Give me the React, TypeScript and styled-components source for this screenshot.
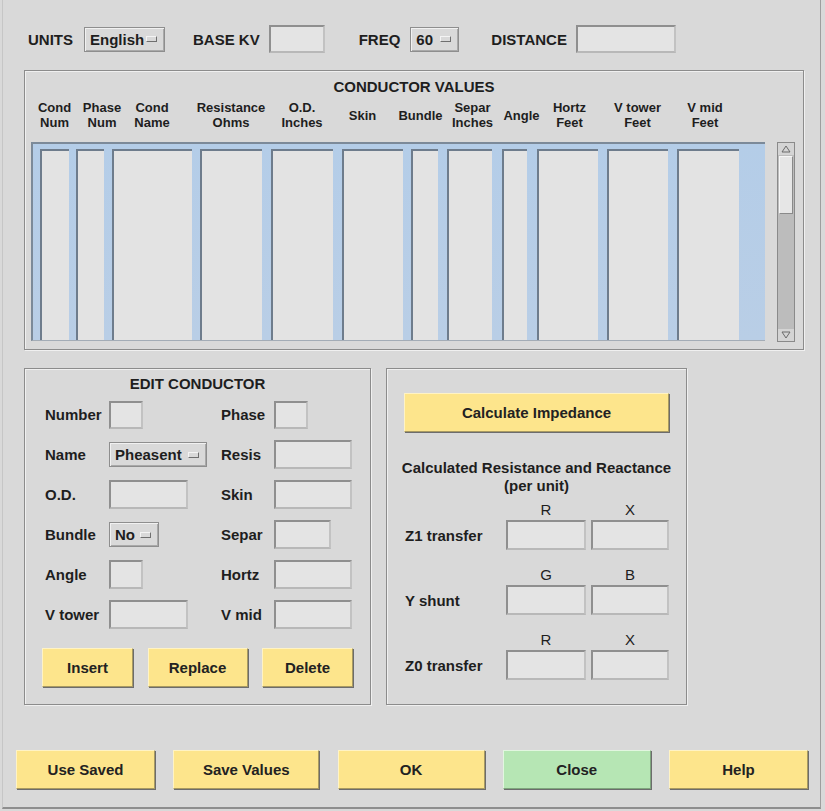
import React from 'react'
import styled, { createGlobalStyle, css } from 'styled-components'

type TColumn = {
  w: number
  track: number
  head: string[]
  dx?: number
}

const columns: TColumn[] = [
  { w: 29, track: 36, head: ['Cond', 'Num'] },
  { w: 28, track: 36, head: ['Phase', 'Num'], dx: 12 },
  { w: 80, track: 88, head: ['Cond', 'Name'] },
  { w: 62, track: 71, head: ['Resistance', 'Ohms'] },
  { w: 62, track: 71, head: ['O.D.', 'Inches'] },
  { w: 61, track: 69, head: ['Skin'], dx: -10 },
  { w: 27, track: 36, head: ['Bundle'], dx: -4 },
  { w: 45, track: 55, head: ['Separ', 'Inches'], dx: 3 },
  { w: 25, track: 35, head: ['Angle'], dx: 7 },
  { w: 61, track: 70, head: ['Hortz', 'Feet'], dx: 2 },
  { w: 61, track: 70, head: ['V tower', 'Feet'] },
  { w: 62, track: 62, head: ['V mid', 'Feet'], dx: -3 },
]

const tracks = columns.map(c => `${c.track}px`).join(' ')

const GlobalStyle = createGlobalStyle`
  html, body {
    margin: 0;
    padding: 0;
    background: #d9d9d9;
  }
  body {
    font-family: 'Liberation Sans', Arial, sans-serif;
    color: #1e1e1e;
  }
`

const Window = styled.div`
  box-sizing: border-box;
  margin-left: 2px;
  width: 819px;
  height: 809px;
  background: #d9d9d9;
  border-left: 1px solid #c6c6c6;
  border-right: 1px solid #9e9e9e;
  border-bottom: 2px solid #8e8e8e;
  display: flex;
  flex-direction: column;
`

const Content = styled.div`
  padding: 25px 0 0 21px;
`

const TopBar = styled.div`
  display: flex;
  align-items: center;
  height: 28px;
  padding-left: 4px;
`

// $lead = space before the group, $gap = label to control
const Group = styled.div<{ $lead?: number; $gap?: number }>`
  display: flex;
  align-items: center;
  gap: ${p => p.$gap ?? 9}px;
  margin-left: ${p => p.$lead ?? 0}px;
`

const Label = styled.span`
  font-size: 15px;
  font-weight: bold;
  white-space: nowrap;
`

const Field = styled.div<{ $w: number; $h?: number }>`
  box-sizing: border-box;
  width: ${p => p.$w}px;
  height: ${p => p.$h ?? 29}px;
  background: #e4e4e4;
  border: 2px solid;
  border-color: #8f8f8f #c2c2c2 #b8b8b8 #8f8f8f;
`

const Dropdown = styled.div<{ $w: number }>`
  box-sizing: border-box;
  width: ${p => p.$w}px;
  height: 25px;
  display: flex;
  align-items: center;
  justify-content: space-between;
  padding: 0 7px 0 5px;
  border: 1px solid #8e8e8e;
  box-shadow: inset 1px 1px 0 #f1f1f1, inset -1px -1px 0 #a9a9a9;
  font-size: 15px;
  font-weight: bold;
`

const Indicator = styled.span`
  box-sizing: border-box;
  width: 11px;
  height: 6px;
  border: 1px solid;
  border-color: #f4f4f4 #6f6f6f #6f6f6f #f4f4f4;
`

const Panel = styled.div<{ $w: number; $h: number }>`
  box-sizing: border-box;
  width: ${p => p.$w}px;
  height: ${p => p.$h}px;
  border: 1px solid #8c8c8c;
  box-shadow: inset 1px 1px 0 #f0f0f0, 1px 1px 0 #f0f0f0;
`

const ValuesPanel = styled(Panel)`
  margin-top: 17px;
`

const PanelTitle = styled.div`
  padding-top: 7px;
  font-size: 15px;
  font-weight: bold;
  line-height: 18px;
  text-align: center;
`

const HeaderRow = styled.div`
  display: grid;
  grid-template-columns: ${tracks};
  align-items: center;
  height: 30px;
  margin-top: 4px;
  padding-left: 15px;
`

const HeaderCell = styled.div<{ $w: number; $dx: number }>`
  width: ${p => p.$w}px;
  display: flex;
  justify-content: center;
  transform: translateX(${p => p.$dx}px);
  font-size: 13px;
  font-weight: bold;
  line-height: 15px;
  text-align: center;
  white-space: nowrap;
`

const TableRow = styled.div`
  display: flex;
  gap: 12px;
  margin-top: 12px;
  padding-left: 6px;
`

const Table = styled.div`
  box-sizing: border-box;
  width: 734px;
  height: 199px;
  padding: 5px 0 0 7px;
  display: grid;
  grid-template-columns: ${tracks};
  background: linear-gradient(#b4cde8, #b9cee6);
  border-top: 2px solid #7c8a99;
  border-left: 2px solid #7c8a99;
  border-bottom: 1px solid #a3acb6;
`

const Column = styled.div<{ $w: number }>`
  box-sizing: border-box;
  width: ${p => p.$w}px;
  background: #e3e3e3;
  border-top: 2px solid #6e7c8c;
  border-left: 2px solid #6e7c8c;
`

const Scrollbar = styled.div`
  box-sizing: border-box;
  width: 18px;
  height: 200px;
  display: flex;
  flex-direction: column;
  background: #bcbcbc;
  border: 1px solid #8a8a8a;
`

const ArrowButton = styled.div`
  height: 12px;
  display: flex;
  align-items: center;
  justify-content: center;
  background: #d4d4d4;
`

const Thumb = styled.div`
  box-sizing: border-box;
  height: 58px;
  margin: 1px 1px 0;
  background: #e6e6e6;
  border: 1px solid;
  border-color: #f6f6f6 #8a8a8a #8a8a8a #f6f6f6;
`

const Trough = styled.div`
  flex: 1;
`

const LowerRow = styled.div`
  display: flex;
  gap: 15px;
  margin-top: 18px;
`

const EditPanel = styled(Panel)`
  padding-top: 6px;
`

const EditTitle = styled(PanelTitle)`
  padding-top: 0;
`

const EditGrid = styled.div`
  display: grid;
  grid-template-columns: 64px 112px 53px auto;
  grid-auto-rows: 29px;
  row-gap: 11px;
  align-items: center;
  margin-top: 7px;
  padding-left: 20px;
`

const ButtonRow = styled.div`
  display: flex;
  gap: 14.5px;
  margin-top: 19px;
  padding-left: 17px;
`

const buttonTone = {
  yellow: css`
    background: #fde58c;
    border-color: #fff3c4 #a89a62 #a89a62 #fff3c4;
  `,
  green: css`
    background: #b6e6b4;
    border-color: #e2f6e0 #7fa67d #7fa67d #e2f6e0;
  `,
}

const Button = styled.button<{ $w: number; $tone?: 'yellow' | 'green' }>`
  box-sizing: border-box;
  width: ${p => p.$w}px;
  height: 39px;
  padding: 0;
  border: 1px solid;
  ${p => buttonTone[p.$tone ?? 'yellow']}
  box-shadow: 1px 1px 0 #6c6c6c;
  font-family: 'Liberation Sans', Arial, sans-serif;
  font-size: 15px;
  font-weight: bold;
  color: #222;
`

const ImpPanel = styled(Panel)`
  padding-top: 24px;
`

const CalcRow = styled.div`
  padding-left: 17px;
`

const ResultText = styled.div`
  margin-top: 27px;
  font-size: 15px;
  font-weight: bold;
  line-height: 18px;
  text-align: center;
  white-space: nowrap;
`

const ImpGroup = styled.div<{ $first?: boolean }>`
  display: grid;
  grid-template-columns: 96px 80px 78px;
  grid-template-rows: 18px 30px;
  column-gap: 5px;
  row-gap: 2px;
  align-items: center;
  margin-top: ${p => (p.$first ? 5 : 15)}px;
  padding-left: 18px;
`

const Letter = styled.span`
  font-size: 15px;
  text-align: center;
`

const Footer = styled.div`
  display: flex;
  justify-content: space-between;
  width: 792px;
  margin: 45px 0 0 13px;
`

const Arrow: React.FC<{ down?: boolean }> = ({ down }) => (
  <svg width="10" height="8" viewBox="0 0 10 8">
    <path
      d={down ? 'M1 1 L9 1 L5 7 Z' : 'M1 7 L9 7 L5 1 Z'}
      fill="none"
      stroke="#6a6a6a"
      strokeWidth="1"
    />
  </svg>
)

const editRows: [string, React.ReactNode, string, React.ReactNode][] = [
  ['Number', <Field $w={34} $h={28} />, 'Phase', <Field $w={34} $h={28} />],
  [
    'Name',
    <Dropdown $w={98}>
      Pheasent <Indicator />
    </Dropdown>,
    'Resis',
    <Field $w={78} />,
  ],
  ['O.D.', <Field $w={79} />, 'Skin', <Field $w={78} />],
  [
    'Bundle',
    <Dropdown $w={50}>
      No <Indicator />
    </Dropdown>,
    'Separ',
    <Field $w={57} />,
  ],
  ['Angle', <Field $w={34} />, 'Hortz', <Field $w={78} />],
  ['V tower', <Field $w={79} />, 'V mid', <Field $w={78} />],
]

const impRows = [
  { name: 'Z1 transfer', a: 'R', b: 'X' },
  { name: 'Y shunt', a: 'G', b: 'B' },
  { name: 'Z0 transfer', a: 'R', b: 'X' },
]

const App: React.FC = () => {
  return (
    <>
      <GlobalStyle />
      <Window>
        <Content>
          <TopBar>
            <Group $gap={11}>
              <Label>UNITS</Label>
              <Dropdown $w={81}>
                English <Indicator />
              </Dropdown>
            </Group>
            <Group $lead={28}>
              <Label>BASE KV</Label>
              <Field $w={56} $h={28} />
            </Group>
            <Group $lead={34} $gap={10}>
              <Label>FREQ</Label>
              <Dropdown $w={49}>
                60 <Indicator />
              </Dropdown>
            </Group>
            <Group $lead={32} $gap={9}>
              <Label>DISTANCE</Label>
              <Field $w={100} $h={28} />
            </Group>
          </TopBar>

          <ValuesPanel $w={780} $h={280}>
            <PanelTitle>CONDUCTOR VALUES</PanelTitle>
            <HeaderRow>
              {columns.map((c, i) => (
                <HeaderCell key={i} $w={c.w} $dx={c.dx ?? 0}>
                  {c.head.map((line, j) => (
                    <React.Fragment key={j}>
                      {j > 0 && <br />}
                      {line}
                    </React.Fragment>
                  ))}
                </HeaderCell>
              ))}
            </HeaderRow>
            <TableRow>
              <Table>
                {columns.map((c, i) => (
                  <Column key={i} $w={c.w} />
                ))}
              </Table>
              <Scrollbar>
                <ArrowButton>
                  <Arrow />
                </ArrowButton>
                <Thumb />
                <Trough />
                <ArrowButton>
                  <Arrow down />
                </ArrowButton>
              </Scrollbar>
            </TableRow>
          </ValuesPanel>

          <LowerRow>
            <EditPanel $w={347} $h={337}>
              <EditTitle>EDIT CONDUCTOR</EditTitle>
              <EditGrid>
                {editRows.map(([l1, f1, l2, f2], i) => (
                  <React.Fragment key={i}>
                    <Label>{l1}</Label>
                    {f1}
                    <Label>{l2}</Label>
                    {f2}
                  </React.Fragment>
                ))}
              </EditGrid>
              <ButtonRow>
                <Button $w={91}>Insert</Button>
                <Button $w={100}>Replace</Button>
                <Button $w={91}>Delete</Button>
              </ButtonRow>
            </EditPanel>

            <ImpPanel $w={301} $h={337}>
              <CalcRow>
                <Button $w={265}>Calculate Impedance</Button>
              </CalcRow>
              <ResultText>
                Calculated Resistance and Reactance
                <br />
                (per unit)
              </ResultText>
              {impRows.map((r, i) => (
                <ImpGroup key={r.name} $first={i === 0}>
                  <span />
                  <Letter>{r.a}</Letter>
                  <Letter>{r.b}</Letter>
                  <Label>{r.name}</Label>
                  <Field $w={80} $h={30} />
                  <Field $w={78} $h={30} />
                </ImpGroup>
              ))}
            </ImpPanel>
          </LowerRow>
        </Content>

        <Footer>
          <Button $w={139}>Use Saved</Button>
          <Button $w={146}>Save Values</Button>
          <Button $w={147}>OK</Button>
          <Button $w={148} $tone="green">
            Close
          </Button>
          <Button $w={139}>Help</Button>
        </Footer>
      </Window>
    </>
  )
}

export default App
